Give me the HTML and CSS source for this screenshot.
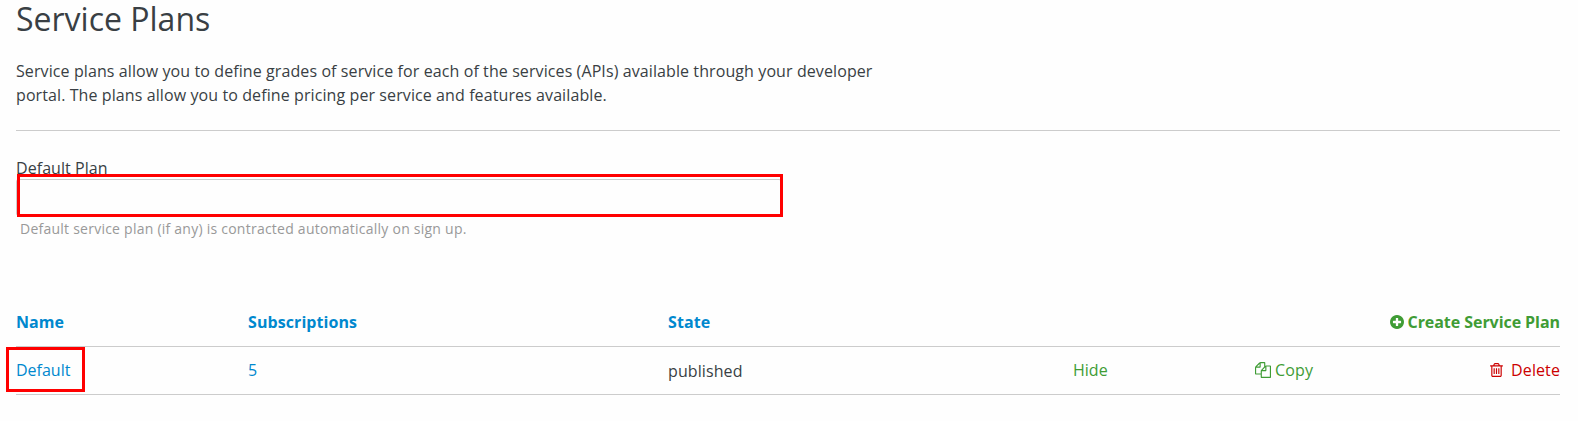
FILE: index.html
```html
<!DOCTYPE html>
<html lang="en">
<head>
<meta charset="utf-8">
<title>Service Plans</title>
<link rel="stylesheet" href="styles.css">
</head>
<body>
<main class="page">
  <h1 class="title">Service Plans</h1>
  <p class="intro">Service plans allow you to define grades of service for each of the services (APIs) available through your developer portal. The plans allow you to define pricing per service and features available.</p>
  <form class="default-plan">
    <label class="label">Default Plan</label>
    <div class="select"><span class="highlight highlight-select"></span></div>
    <p class="hint">Default service plan (if any) is contracted automatically on sign up.</p>
  </form>
  <section class="plans">
    <div class="row head">
      <a class="link">Name</a>
      <a class="link">Subscriptions</a>
      <a class="link">State</a>
      <a class="action create"><svg class="icon-plus" viewBox="128 128 1536 1536"><path d="M1344 960v-128q0-26-19-45t-45-19h-256v-256q0-26-19-45t-45-19h-128q-26 0-45 19t-19 45v256h-256q-26 0-45 19t-19 45v128q0 26 19 45t45 19h256v256q0 26 19 45t45 19h128q26 0 45-19t19-45v-256h256q26 0 45-19t19-45zm320-64q0 209-103 385.5t-279.5 279.5-385.5 103-385.5-103-279.5-279.5-103-385.5 103-385.5 279.5-279.5 385.5-103 385.5 103 279.5 279.5 103 385.5z"/></svg>Create Service Plan</a>
    </div>
    <div class="row body">
      <a class="link name">Default<span class="highlight highlight-name"></span></a>
      <a class="link">5</a>
      <span class="state">published</span>
      <a class="action hide">Hide</a>
      <a class="action copy"><svg class="icon-copy" viewBox="0 0 1792 1792"><path d="M1696 384q40 0 68 28t28 68v1216q0 40-28 68t-68 28h-960q-40 0-68-28t-28-68v-288h-544q-40 0-68-28t-28-68v-672q0-40 20-88t48-76l408-408q28-28 76-48t88-20h416q40 0 68 28t28 68v328q68-40 128-40h416zm-544 213l-299 299h299v-299zm-640-384l-299 299h299v-299zm196 647l316-316v-416h-384v416q0 40-28 68t-68 28h-416v640h512v-256q0-40 20-88t48-76zm956 804v-1152h-384v416q0 40-28 68t-68 28h-416v640h896z"/></svg>Copy</a>
      <a class="action delete"><svg class="icon-trash" viewBox="192 128 1408 1536"><path d="M704 736v576q0 14-9 23t-23 9h-64q-14 0-23-9t-9-23v-576q0-14 9-23t23-9h64q14 0 23 9t9 23zm256 0v576q0 14-9 23t-23 9h-64q-14 0-23-9t-9-23v-576q0-14 9-23t23-9h64q14 0 23 9t9 23zm256 0v576q0 14-9 23t-23 9h-64q-14 0-23-9t-9-23v-576q0-14 9-23t23-9h64q14 0 23 9t9 23zm128 724v-948h-896v948q0 22 7 40.5t14.5 27 10.5 8.5h832q3 0 10.5-8.5t14.5-27 7-40.5zm-672-1076h448l-48-117q-7-9-17-11h-317q-10 2-17 11zm928 32v64q0 14-9 23t-23 9h-96v948q0 83-47 143.5t-113 60.5h-832q-66 0-113-58.5t-47-141.5v-952h-96q-14 0-23-9t-9-23v-64q0-14 9-23t23-9h309l70-167q15-37 54-63t79-26h320q40 0 79 26t54 63l70 167h309q14 0 23 9t9 23z"/></svg>Delete</a>
    </div>
  </section>
</main>
</body>
</html>
```
FILE: styles.css
```css
* { box-sizing: border-box; }
body {
  margin: 0;
  background: #fefefe;
  color: #393f44;
  font: 16px/24px "Open Sans", sans-serif;
  overflow: hidden;
}
.page { padding: 0 18px 0 16px; }
.title { margin: 0; font-size: 32px; line-height: 38px; font-weight: 400; }
.intro { margin: 0; padding-top: 21px; width: 880px; letter-spacing: 0.095px; }
.default-plan {
  margin-top: 23px;
  padding-top: 25px;
  border-top: 1px solid #ccc;
}
.label { display: block; height: 23px; letter-spacing: 0.06px; }
.select {
  position: relative;
  width: 766px;
  height: 37px;
  border: 1px solid #ccc;
  border-bottom-color: transparent;
  border-radius: 3px;
}
.highlight { position: absolute; border: 3px solid #f00; pointer-events: none; }
.highlight-select { left: 0; top: -6px; width: 766px; height: 43px; }
.hint { margin: 0; padding: 1px 4px 0; font-size: 14px; color: #999; letter-spacing: 0.24px; }
.plans { margin-top: 57px; }
.row {
  display: grid;
  grid-template-columns: 232px 420px 405px 182px 1fr auto;
  height: 48px;
  align-items: center;
  border-bottom: 1px solid #ccc;
}
.head { height: 49px; font-weight: 700; letter-spacing: 0.08px; }
.body { padding-bottom: 2px; }
.link { color: #0088ce; }
.name { position: relative; }
.highlight-name { left: -10px; top: -11px; width: 79px; height: 45px; }
.state { padding-top: 2px; letter-spacing: 0.1px; }
.action { display: flex; align-items: center; color: #3f9c35; }
.create { grid-column: 4 / -1; justify-content: flex-end; gap: 4px; letter-spacing: -0.06px; }
.copy { gap: 4px; letter-spacing: 0.15px; }
.delete { color: #c00; gap: 8px; grid-column: 6; letter-spacing: 0.1px; }
.icon-plus { width: 14px; height: 14px; fill: currentColor; }
.icon-copy { width: 16px; height: 16px; fill: currentColor; }
.icon-trash { width: 13px; height: 14px; fill: currentColor; }
```
